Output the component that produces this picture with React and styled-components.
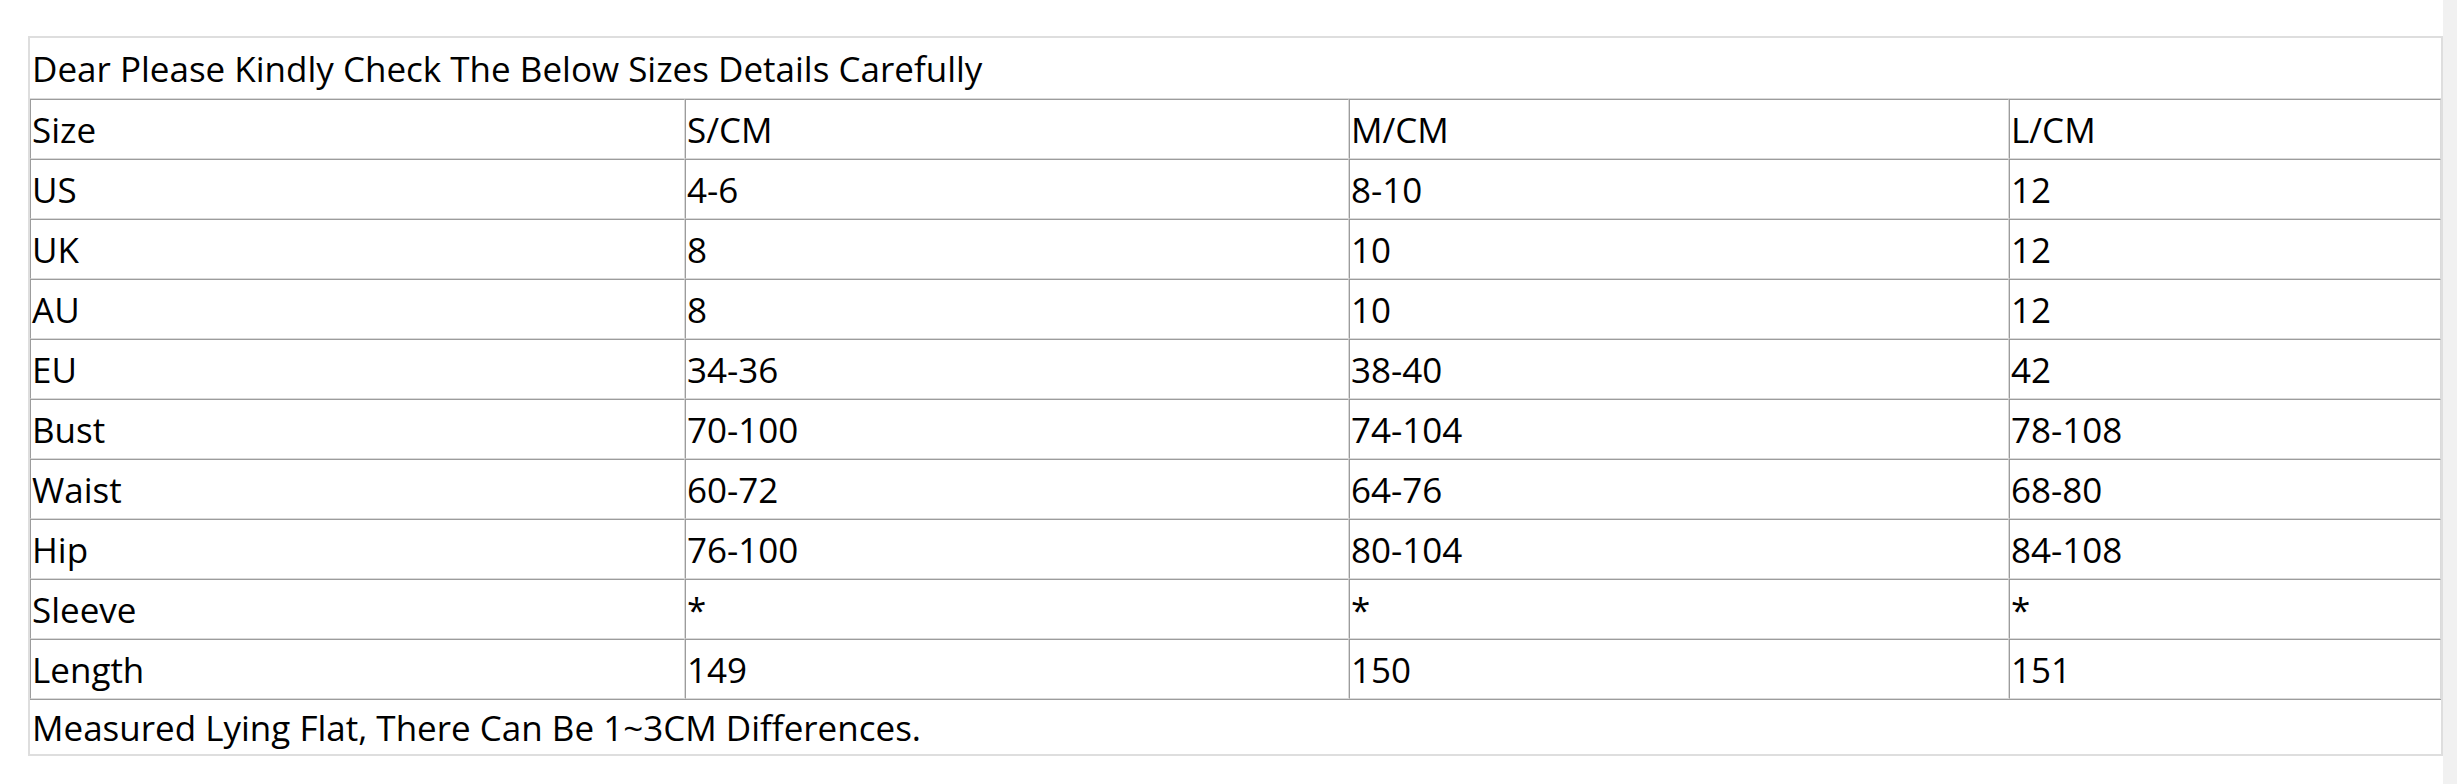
import React from "react";
import styled, { createGlobalStyle } from "styled-components";

const GlobalStyle = createGlobalStyle`
  html, body {
    margin: 0;
    padding: 0;
    background: #ffffff;
    overflow: hidden;
  }
  body {
    font-family: "Open Sans", "Noto Sans", sans-serif;
    color: #000;
  }
`;

const columns = [
  { label: "Size", width: 655 },
  { label: "S/CM", width: 664 },
  { label: "M/CM", width: 660 },
  { label: "L/CM", width: 432 },
];

const rows = [
  ["US", "4-6", "8-10", "12"],
  ["UK", "8", "10", "12"],
  ["AU", "8", "10", "12"],
  ["EU", "34-36", "38-40", "42"],
  ["Bust", "70-100", "74-104", "78-108"],
  ["Waist", "60-72", "64-76", "68-80"],
  ["Hip", "76-100", "80-104", "84-108"],
  ["Sleeve", "*", "*", "*"],
  ["Length", "149", "150", "151"],
];

const App = () => {
  return (
    <Page>
      <GlobalStyle />
      <Content>
        <SizeTable>
          <colgroup>
            {columns.map((col) => (
              <col key={col.label} style={{ width: col.width }} />
            ))}
          </colgroup>
          <tbody>
            <tr>
              <NoteCell colSpan={4}>
                Dear Please Kindly Check The Below Sizes Details Carefully
              </NoteCell>
            </tr>
            <tr>
              {columns.map((col) => (
                <Cell key={col.label}>{col.label}</Cell>
              ))}
            </tr>
            {rows.map((row) => (
              <tr key={row[0]}>
                {row.map((value, i) => (
                  <Cell key={i}>{value}</Cell>
                ))}
              </tr>
            ))}
            <tr>
              <NoteCell colSpan={4} $footer>
                Measured Lying Flat, There Can Be 1~3CM Differences.
              </NoteCell>
            </tr>
          </tbody>
        </SizeTable>
      </Content>
      <Track />
    </Page>
  );
};

export default App;

const Page = styled.div`
  display: flex;
  width: 100%;
  height: 784px;
  overflow: hidden;
`;

const Content = styled.div`
  flex: 1;
  padding: 36px 0 0 28px;
`;

const Track = styled.div`
  width: 18px;
  background: #f1f1f1;
`;

const SizeTable = styled.table`
  width: 2411px;
  table-layout: fixed;
  border-collapse: separate;
  border-spacing: 0;
  border: 2px solid #dedede;
  font-size: 35px;
  line-height: 1;
`;

const Cell = styled.td`
  box-sizing: border-box;
  height: 60px;
  padding: 0 2px 0 1px;
  border-top: 1px solid #9c9c9c;
  border-left: 1px solid #9c9c9c;
  border-bottom: 1px solid #dadada;
  border-right: 1px solid #dadada;
  text-align: left;
  vertical-align: middle;
  white-space: nowrap;
`;

const NoteCell = styled.td`
  box-sizing: border-box;
  height: ${(p) => (p.$footer ? "55px" : "61px")};
  padding: 0 2px;
  border-top: ${(p) => (p.$footer ? "1px solid #9c9c9c" : "none")};
  border-bottom: ${(p) => (p.$footer ? "none" : "1px solid #dadada")};
  text-align: left;
  vertical-align: middle;
  white-space: nowrap;
`;
